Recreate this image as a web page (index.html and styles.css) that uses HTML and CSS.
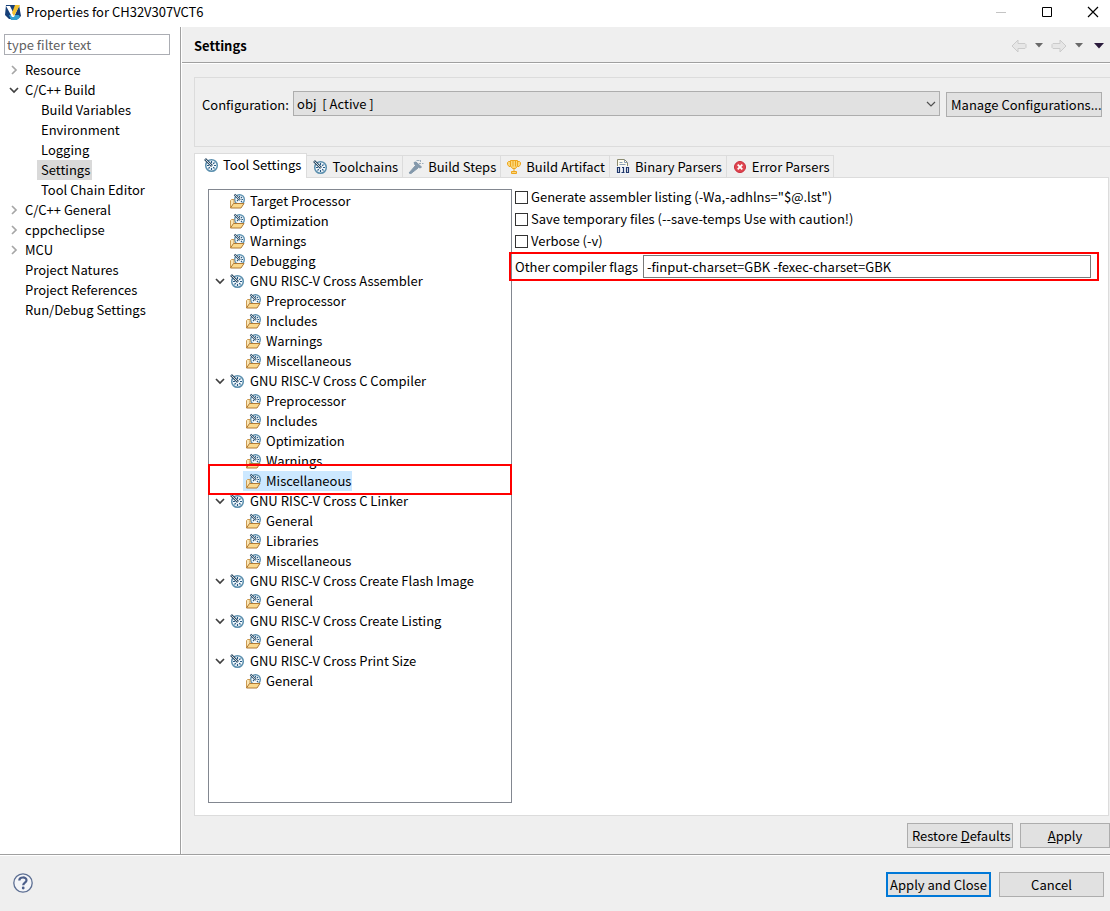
FILE: index.html
```html
<!DOCTYPE html>
<html lang="en">
<head>
<meta charset="utf-8">
<title>Properties for CH32V307VCT6</title>
<link rel="stylesheet" href="styles.css">
</head>
<body>
<svg class="defs" aria-hidden="true">
  <symbol id="dial" viewBox="0 0 16 16">
    <circle cx="8.500" cy="8.500" r="5.800" fill="#f4f9fc" stroke="#5b8fae" stroke-width="1.500"/>
    <path d="M8.500 4v2M8.500 11v2M4 8.500h2M11 8.500h2M5.500 11.500l1.300-1.300M10.200 6.800l1.300-1.300M10.200 10.200l1.300 1.300" stroke="#255a86" stroke-width="1.200"/>
    <path d="M2 2l7 7" stroke="#34526b" stroke-width="2.600"/>
    <path d="M2.500 2.500l6 6" stroke="#d5dee4" stroke-width="1"/>
  </symbol>
  <symbol id="folder" viewBox="0 0 16 16">
    <circle cx="10.500" cy="6.500" r="4.800" fill="#f4f9fc" stroke="#5b8fae" stroke-width="1.400"/>
    <path d="M10.500 3v1.500M12.500 6.500H14M12 5l1-1M12 8l1 1M8 8l1-1" stroke="#255a86" stroke-width="1.200"/>
    <path d="M5.500 1.500l5.500 5.500" stroke="#34526b" stroke-width="2.200"/>
    <path d="M6 2l4.500 4.500" stroke="#d5dee4" stroke-width=".9"/>
    <path d="M1.500 15V7.500l1-1h2.500v4" fill="#fbe7b6" stroke="#cc9a50"/>
    <path d="M1.500 15l3-4.500h10.500L12 15z" fill="#fbd98d" stroke="#b07a35"/>
  </symbol>
  <symbol id="open" viewBox="0 0 10 10"><path d="M1 3l4 4 4-4" fill="none" stroke="#404040" stroke-width="1.700"/></symbol>
  <symbol id="closed" viewBox="0 0 10 10"><path d="M3 1l4 4-4 4" fill="none" stroke="#a6a6a6" stroke-width="1.700"/></symbol>
</svg>

<header class="titlebar">
  <svg class="app-icon" viewBox="0 0 16 16"><path d="M1 1h13l2 11-3 3H4L0 11z" fill="#163f78"/><path d="M4 11h10l1 2-3 3H6z" fill="#35a0cf"/><path d="M1 2h4l3 6 3-7 3 1-5 11H7z" fill="#fff"/><path d="M10 1h5L9 12 7 9z" fill="#f2c230"/></svg>
  <span class="caption">Properties for CH32V307VCT6</span>
  <button class="win" aria-label="Minimize"><svg viewBox="0 0 12 12"><path d="M1 6.500h10" stroke="#c4c4c4"/></svg></button>
  <button class="win" aria-label="Maximize"><svg viewBox="0 0 12 12"><path d="M1.500 1.500h9v9h-9z" fill="none" stroke="#000"/></svg></button>
  <button class="win" aria-label="Close"><svg viewBox="0 0 12 12"><path d="M1 1l10 10M11 1L1 11" stroke="#000" stroke-width="1.200"/></svg></button>
</header>

<div class="workspace">
  <nav class="sidebar">
    <input class="filter" type="text" placeholder="type filter text" aria-label="Filter">
    <ul class="tree nav-tree">
      <li><div class="row"><svg class="arrow"><use href="#closed"/></svg><span class="text">Resource</span></div></li>
      <li><div class="row"><svg class="arrow"><use href="#open"/></svg><span class="text">C/C++ Build</span></div>
        <ul>
          <li><div class="row"><span class="text">Build Variables</span></div></li>
          <li><div class="row"><span class="text">Environment</span></div></li>
          <li><div class="row"><span class="text">Logging</span></div></li>
          <li><div class="row"><span class="text current">Settings</span></div></li>
          <li><div class="row"><span class="text">Tool Chain Editor</span></div></li>
        </ul></li>
      <li><div class="row"><svg class="arrow"><use href="#closed"/></svg><span class="text">C/C++ General</span></div></li>
      <li><div class="row"><svg class="arrow"><use href="#closed"/></svg><span class="text">cppcheclipse</span></div></li>
      <li><div class="row"><svg class="arrow"><use href="#closed"/></svg><span class="text">MCU</span></div></li>
      <li><div class="row"><span class="arrow"></span><span class="text">Project Natures</span></div></li>
      <li><div class="row"><span class="arrow"></span><span class="text">Project References</span></div></li>
      <li><div class="row"><span class="arrow"></span><span class="text">Run/Debug Settings</span></div></li>
    </ul>
  </nav>

  <main class="page">
    <div class="page-head">
      <h1>Settings</h1>
      <button class="tool" aria-label="Back"><svg class="nav-arrow" viewBox="0 0 16 14"><path d="M1 7l6-6v3.500h7l1 1v3l-1 1H7V13z" fill="#e6e6e6" stroke="#cbcbcb"/></svg></button>
      <button class="tool" aria-label="Back history"><svg class="caret" viewBox="0 0 8 5"><path d="M0 0h8L4 4.500z" fill="#6a6a6a"/></svg></button>
      <button class="tool" aria-label="Forward"><svg class="nav-arrow" viewBox="0 0 16 14"><path d="M15 7L9 1v3.500H2l-1 1v3l1 1h7V13z" fill="#e6e6e6" stroke="#cbcbcb"/></svg></button>
      <button class="tool" aria-label="Forward history"><svg class="caret" viewBox="0 0 8 5"><path d="M0 0h8L4 4.500z" fill="#6a6a6a"/></svg></button>
      <button class="tool menu" aria-label="Menu"><svg class="caret big" viewBox="0 0 10 6"><path d="M0 0h10L5 5.500z" fill="#2a1a3c"/></svg></button>
    </div>

    <section class="config">
      <label for="config">Configuration:</label>
      <div class="select">
        <select id="config"><option>obj&nbsp; [ Active ]</option></select>
        <svg class="chevron" viewBox="0 0 10 10"><path d="M1 3l4 4 4-4" fill="none" stroke="#505050" stroke-width="1.200"/></svg>
      </div>
      <button class="btn">Manage Configurations...</button>
    </section>

    <div class="tabs" role="tablist">
      <button class="tab active" role="tab"><svg class="icon"><use href="#dial"/></svg>Tool Settings</button>
      <button class="tab" role="tab"><svg class="icon"><use href="#dial"/></svg>Toolchains</button>
      <button class="tab" role="tab"><svg class="icon" viewBox="0 0 16 16"><path d="M1 14l6.500-7.500 2.500 2.500L3 14.500z" fill="#8398ab" stroke="#8398ab"/><path d="M6 3.500L8 3l5.500 5-1.500 1-2-1-3-2z" fill="#8398ab" stroke="#8398ab"/><path d="M8.500 1.500h3M12.500 1v2M11 4.500h2M14 4.500h1.500" stroke="#9dadbb"/></svg>Build Steps</button>
      <button class="tab" role="tab"><svg class="icon" viewBox="0 0 16 16"><path d="M4.500 1.500h7V7L9.500 9.500h-3L4.500 7zM4.500 2.500h-2l-1 1v2l1.500 2h1.500M11.500 2.500h2l1 1v2L13 7.500h-1.500M8 9.500v3M5.500 12.500h5v2h-5zM7 1.500v6M9.500 1.500v6" fill="#fbd778" stroke="#eda51e"/></svg>Build Artifact</button>
      <button class="tab" role="tab"><svg class="icon" viewBox="0 0 16 16"><path d="M2.500 14.500V.5h7l3 3v11z" fill="#fffdf0" stroke="#8c8b6d"/><path d="M9.500.5v3h3M4.500 3.500h3M4.500 5.500h6" fill="none" stroke="#8c9fb5"/><path d="M1 7h14v8H1z" fill="#f2f4f8"/><path d="M2.500 8.500h2v5h-2zM11.500 8.500h2v5h-2zM7 8.500h1.500v5M6.500 13.500h3" fill="none" stroke="#20386c" stroke-width="1.200"/></svg>Binary Parsers</button>
      <button class="tab" role="tab"><svg class="icon" viewBox="0 0 16 16"><circle cx="8" cy="8" r="5.500" fill="#e04650" stroke="#c92c3c"/><path d="M5.700 5.700l4.600 4.600M10.300 5.700l-4.600 4.600" stroke="#fff" stroke-width="1.800"/></svg>Error Parsers</button>
    </div>

    <section class="panel">
      <ul class="tree tool-tree">
        <li><div class="row"><span class="arrow"></span><svg class="icon"><use href="#folder"/></svg><span class="text">Target Processor</span></div></li>
        <li><div class="row"><span class="arrow"></span><svg class="icon"><use href="#folder"/></svg><span class="text">Optimization</span></div></li>
        <li><div class="row"><span class="arrow"></span><svg class="icon"><use href="#folder"/></svg><span class="text">Warnings</span></div></li>
        <li><div class="row"><span class="arrow"></span><svg class="icon"><use href="#folder"/></svg><span class="text">Debugging</span></div></li>
        <li><div class="row"><svg class="arrow"><use href="#open"/></svg><svg class="icon"><use href="#dial"/></svg><span class="text">GNU RISC-V Cross Assembler</span></div>
          <ul>
            <li><div class="row"><svg class="icon"><use href="#folder"/></svg><span class="text">Preprocessor</span></div></li>
            <li><div class="row"><svg class="icon"><use href="#folder"/></svg><span class="text">Includes</span></div></li>
            <li><div class="row"><svg class="icon"><use href="#folder"/></svg><span class="text">Warnings</span></div></li>
            <li><div class="row"><svg class="icon"><use href="#folder"/></svg><span class="text">Miscellaneous</span></div></li>
          </ul></li>
        <li><div class="row"><svg class="arrow"><use href="#open"/></svg><svg class="icon"><use href="#dial"/></svg><span class="text">GNU RISC-V Cross C Compiler</span></div>
          <ul>
            <li><div class="row"><svg class="icon"><use href="#folder"/></svg><span class="text">Preprocessor</span></div></li>
            <li><div class="row"><svg class="icon"><use href="#folder"/></svg><span class="text">Includes</span></div></li>
            <li><div class="row"><svg class="icon"><use href="#folder"/></svg><span class="text">Optimization</span></div></li>
            <li><div class="row"><svg class="icon"><use href="#folder"/></svg><span class="text">Warnings</span></div></li>
            <li class="marked"><div class="row selected"><svg class="icon"><use href="#folder"/></svg><span class="text">Miscellaneous</span></div></li>
          </ul></li>
        <li><div class="row"><svg class="arrow"><use href="#open"/></svg><svg class="icon"><use href="#dial"/></svg><span class="text">GNU RISC-V Cross C Linker</span></div>
          <ul>
            <li><div class="row"><svg class="icon"><use href="#folder"/></svg><span class="text">General</span></div></li>
            <li><div class="row"><svg class="icon"><use href="#folder"/></svg><span class="text">Libraries</span></div></li>
            <li><div class="row"><svg class="icon"><use href="#folder"/></svg><span class="text">Miscellaneous</span></div></li>
          </ul></li>
        <li><div class="row"><svg class="arrow"><use href="#open"/></svg><svg class="icon"><use href="#dial"/></svg><span class="text">GNU RISC-V Cross Create Flash Image</span></div>
          <ul>
            <li><div class="row"><svg class="icon"><use href="#folder"/></svg><span class="text">General</span></div></li>
          </ul></li>
        <li><div class="row"><svg class="arrow"><use href="#open"/></svg><svg class="icon"><use href="#dial"/></svg><span class="text">GNU RISC-V Cross Create Listing</span></div>
          <ul>
            <li><div class="row"><svg class="icon"><use href="#folder"/></svg><span class="text">General</span></div></li>
          </ul></li>
        <li><div class="row"><svg class="arrow"><use href="#open"/></svg><svg class="icon"><use href="#dial"/></svg><span class="text">GNU RISC-V Cross Print Size</span></div>
          <ul>
            <li><div class="row"><svg class="icon"><use href="#folder"/></svg><span class="text">General</span></div></li>
          </ul></li>
      </ul>

      <div class="options">
        <label class="check"><input type="checkbox">Generate assembler listing (-Wa,-adhlns="$@.lst")</label>
        <label class="check"><input type="checkbox">Save temporary files (--save-temps Use with caution!)</label>
        <label class="check"><input type="checkbox">Verbose (-v)</label>
        <div class="flags">
          <label for="flags">Other compiler flags</label>
          <input id="flags" type="text" value="-finput-charset=GBK -fexec-charset=GBK">
        </div>
      </div>
    </section>

    <div class="page-actions">
      <button class="btn restore">Restore <u>D</u>efaults</button>
      <button class="btn apply"><u>A</u>pply</button>
    </div>
  </main>
</div>

<footer class="footer">
  <button class="help" aria-label="Help"><svg viewBox="0 0 20 20"><circle cx="10" cy="10" r="9.200" fill="#f4f5f8" stroke="#5d6f93" stroke-width="1.300"/><path d="M6.300 7.500C6.300 3.500 13.500 3.500 13.500 7.300c0 2.400-3.300 2.400-3.300 5" fill="none" stroke="#4d5f8a" stroke-width="2.200"/><circle cx="10.200" cy="15" r="1.400" fill="#4d5f8a"/></svg></button>
  <button class="btn wide default">Apply and Close</button>
  <button class="btn wide">Cancel</button>
</footer>
</body>
</html>
```
FILE: styles.css
```css
*, *::before, *::after { box-sizing: border-box; }

body {
  margin: 0;
  min-height: 100vh;
  display: flex;
  flex-direction: column;
  background: #efefef;
  color: #000;
  font: 13px/20px "Noto Sans CJK SC", "Noto Sans", sans-serif;
}

button, input, select { font: inherit; color: inherit; }
button { padding: 0; border: 0; background: none; white-space: nowrap; }
svg { display: block; }
ul { list-style: none; margin: 0; padding: 0; }
.defs { position: absolute; width: 0; height: 0; }

/* Title bar */
.titlebar {
  display: flex;
  align-items: center;
  height: 27px;
  padding: 0 5px 4px;
  background: #fff;
}
.app-icon { width: 16px; height: 16px; }
.caption { flex: 1; padding-left: 5px; }
.win { width: 46px; display: flex; justify-content: center; }
.win svg { width: 12px; height: 12px; }
.titlebar .win:last-child { width: 24px; margin-left: 11px; }

/* Sidebar */
.workspace { flex: 1; display: flex; }
.sidebar {
  width: 181px;
  padding: 7px 10px 0 4px;
  background: #fff;
  border-right: 1px solid #a0a0a0;
}
.filter {
  display: block;
  width: 100%;
  height: 21px;
  padding: 0 2px;
  border: 1px solid #abadb3;
  background: #fff;
}
.filter::placeholder { color: #5f5f5f; opacity: 1; }

/* Trees */
.row { display: flex; align-items: center; height: 20px; white-space: nowrap; }
.arrow { width: 10px; height: 10px; flex: none; }
.icon { width: 16px; height: 16px; flex: none; }
.nav-tree { padding: 5px 0 0 5px; }
.nav-tree .arrow { margin-right: 3px; }
.nav-tree ul { padding-left: 16px; }
.nav-tree .text { padding: 0 4px 0 3px; }
.nav-tree ul .text { margin-left: 12px; padding: 0 2px 0 4px; }
.current { background: #d9d9d9; }

/* Page */
.page { flex: 1; min-width: 0; display: flex; flex-direction: column; border-left: 1px solid #fff; }
.page-head {
  display: flex;
  align-items: center;
  gap: 8px;
  height: 36px;
  padding: 2px 6px 0 12px;
  border-bottom: 1px solid #a0a0a0;
  box-shadow: 0 1px #fff;
}
h1 { flex: 1; margin: 0; font-size: 13px; line-height: 20px; }
.nav-arrow { width: 16px; height: 14px; }
.caret { width: 8px; height: 5px; }
.caret.big { width: 10px; height: 6px; }
.menu { margin-left: 3px; }

.config {
  display: flex;
  align-items: flex-start;
  height: 70px;
  margin: 14px 0 0 12px;
  padding: 13px 8px 0 7px;
  border: 1px solid #dcdcdc;
  border-right: 0;
}
.config label { width: 91px; padding-top: 4px; }
.select { position: relative; flex: 1; margin-right: 6px; }
.select select {
  display: block;
  appearance: none;
  width: 100%;
  height: 25px;
  padding: 0 3px;
  border: 1px solid #adadad;
  border-radius: 0;
  background: #e1e1e1;
}
.chevron { position: absolute; right: 4px; top: 8px; width: 10px; height: 10px; pointer-events: none; }
.btn {
  height: 25px;
  padding: 0 4px;
  border: 1px solid #adadad;
  background: #e1e1e1;
}
.config .btn { margin-top: 1px; width: 156px; }

/* Tabs */
.tabs { display: flex; align-items: flex-end; margin: 6px 0 0 12px; height: 24px; }
.tab {
  display: flex;
  align-items: center;
  gap: 4px;
  height: 22px;
  padding: 0 4px 0 5px;
  border: 1px solid #dcdcdc;
  border-left: 0;
  border-bottom: 0;
}
.tab.active {
  z-index: 1;
  height: 25px;
  margin-bottom: -1px;
  padding: 0 5px 3px 8px;
  border-left: 1px solid #dcdcdc;
  background: #fff;
}

.panel {
  flex: 1;
  display: flex;
  margin: 0 1px 0 12px;
  padding: 11px 9px 12px 13px;
  border: 1px solid #dcdcdc;
  background: #fff;
}
.tool-tree { width: 304px; flex: none; padding: 1px 0 0 6px; border: 1px solid #828790; }
.tool-tree .arrow { margin-right: 4px; }
.tool-tree ul { padding-left: 28px; }
.tool-tree .row { width: max-content; }
.tool-tree .text { padding: 0 1px 0 5px; }
.tool-tree ul .row { padding-left: 2px; }
.tool-tree .selected { background: #cce8ff; }
.marked { position: relative; }
.marked::after {
  content: "";
  position: absolute;
  top: -7px;
  left: -35px;
  width: 304px;
  height: 31px;
  border: 2px solid #f00;
}

.options { flex: 1; min-width: 0; padding-left: 3px; }
.check { display: flex; align-items: center; gap: 3px; height: 22px; }
.check:first-child { margin-top: -3px; }
.check input {
  appearance: none;
  width: 13px;
  height: 13px;
  margin: 0;
  border: 1px solid #333;
  background: #fff;
}
.flags {
  display: flex;
  align-items: center;
  height: 29px;
  margin-left: -6px;
  padding: 0 6px 0 4px;
  border: 2px solid #f00;
}
.flags label { width: 128px; }
.flags input {
  flex: 1;
  min-width: 0;
  height: 23px;
  padding: 0 3px;
  border: 1px solid #7a7a7a;
}

.page-actions { display: flex; justify-content: flex-end; gap: 7px; padding: 7px 0 6px; }
.restore { width: 106px; }
.apply { width: 90px; }

/* Footer */
.footer {
  display: flex;
  align-items: center;
  gap: 8px;
  height: 57px;
  padding: 3px 6px 0 13px;
  border-top: 1px solid #a0a0a0;
  box-shadow: inset 0 1px #fff;
}
.help { margin: 0 auto 3px 0; }
.help svg { width: 20px; height: 20px; }
.wide { width: 105px; }
.default { border: 2px solid #0078d7; padding: 0; }
```
